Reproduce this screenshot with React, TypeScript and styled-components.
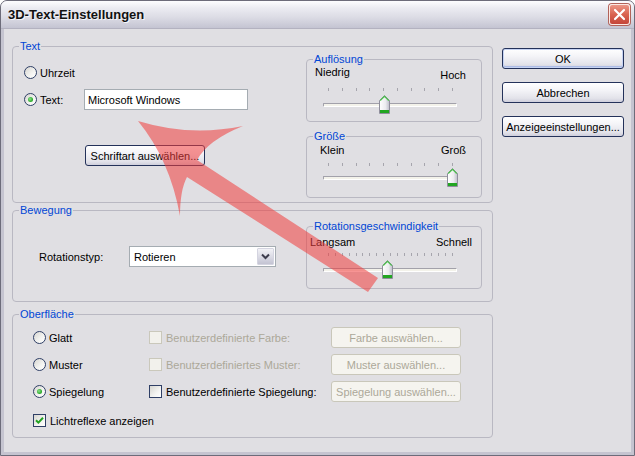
import React from "react";
import styled, { createGlobalStyle } from "styled-components";

const GlobalStyle = createGlobalStyle`
  html, body {
    margin: 0;
    padding: 0;
    background: #ffffff;
  }
  body {
    font-family: "Liberation Sans", Arial, sans-serif;
    font-size: 11px;
    color: #000;
  }
  * {
    box-sizing: border-box;
  }
`;

const Window = styled.div`
  position: relative;
  width: 635px;
  height: 456px;
  display: flex;
  flex-direction: column;
  background: #c5c4d0;
  border: 1px solid #6d6c7a;
  border-radius: 7px 7px 0 0;
  overflow: hidden;
`;

const TitleBar = styled.div`
  flex: none;
  height: 28px;
  display: flex;
  align-items: center;
  justify-content: space-between;
  padding: 0 4px 0 7px;
  background: linear-gradient(
    #fdfdff 0%,
    #ececf2 25%,
    #dcdce5 60%,
    #c4c4d2 100%
  );
  border-bottom: 1px solid #b3b2c0;
`;

const Title = styled.div`
  font-size: 13px;
  font-weight: bold;
  color: #111;
  text-shadow: 1px 1px 0 #f6f6fa;
`;

const CloseButton = styled.div`
  width: 21px;
  height: 21px;
  border-radius: 3px;
  border: 1px solid #fbe9e4;
  box-shadow: 0 0 0 1px #b2635a;
  background: linear-gradient(#eb9787 0%, #d9634f 50%, #c4463a 100%);
  display: flex;
  align-items: center;
  justify-content: center;
`;

const Client = styled.div`
  flex: 1;
  margin: 0 3px 3px;
  background: #e0dfe3;
  display: flex;
  padding: 11px 0 0 8px;
`;

const LeftColumn = styled.div`
  width: 481px;
  display: flex;
  flex-direction: column;
`;

const Group = styled.fieldset<{ $pb?: number; $pr?: number; $mt?: number }>`
  margin: ${(p) => p.$mt ?? 0}px 0 0 0;
  min-width: 0;
  padding: 0 ${(p) => p.$pr ?? 0}px ${(p) => p.$pb ?? 0}px 0;
  border: 1px solid #b9b8c2;
  border-radius: 4px;
`;

const Legend = styled.legend`
  margin-left: 6px;
  padding: 0 1px;
  line-height: 13px;
  font-size: 11px;
  color: #0046d5;
`;

const Split = styled.div`
  display: flex;
`;

const LeftPane = styled.div<{ $pt: number; $pl: number }>`
  flex: 1;
  display: flex;
  flex-direction: column;
  align-items: flex-start;
  padding: ${(p) => p.$pt}px 0 0 ${(p) => p.$pl}px;
`;

const RightPane = styled.div<{ $mt?: number }>`
  width: 176px;
  display: flex;
  flex-direction: column;
  gap: 8px;
  margin-top: ${(p) => p.$mt ?? 0}px;
`;

const Row = styled.div<{ $mt?: number; $ml?: number; $h?: number }>`
  display: flex;
  align-items: center;
  height: ${(p) => p.$h ?? 13}px;
  margin-top: ${(p) => p.$mt ?? 0}px;
  margin-left: ${(p) => p.$ml ?? 0}px;
`;

const Label = styled.span<{ $w?: number; $disabled?: boolean; $gap?: number }>`
  display: inline-block;
  margin-left: ${(p) => p.$gap ?? 3}px;
  width: ${(p) => (p.$w ? `${p.$w}px` : "auto")};
  color: ${(p) => (p.$disabled ? "#aca899" : "#000")};
  white-space: nowrap;
`;

const RadioCircle = styled.span<{ $checked?: boolean }>`
  position: relative;
  flex: none;
  width: 13px;
  height: 13px;
  border-radius: 50%;
  border: 1px solid #2f3f66;
  background: linear-gradient(135deg, #d6d5d0 0%, #f4f4f2 60%, #ffffff 100%);

  &::after {
    content: "";
    display: ${(p) => (p.$checked ? "block" : "none")};
    position: absolute;
    left: 3px;
    top: 3px;
    width: 5px;
    height: 5px;
    border-radius: 50%;
    background: radial-gradient(circle at 40% 40%, #8ee08e 0%, #2fae2f 60%, #1d8f1d 100%);
  }
`;

const CheckBox = styled.span<{ $disabled?: boolean }>`
  flex: none;
  width: 13px;
  height: 13px;
  border: 1px solid ${(p) => (p.$disabled ? "#cac8bb" : "#2f3f66")};
  background: ${(p) =>
    p.$disabled
      ? "#f2f1ec"
      : "linear-gradient(135deg, #d6d5d0 0%, #f4f4f2 60%, #ffffff 100%)"};
  display: flex;
  align-items: center;
  justify-content: center;
`;

const TextBox = styled.div`
  width: 164px;
  height: 21px;
  border: 1px solid #a5acb2;
  background: #fff;
  padding: 0 3px;
  display: flex;
  align-items: center;
`;

const Button = styled.div<{ $w: number; $disabled?: boolean; $default?: boolean }>`
  width: ${(p) => p.$w}px;
  height: 21px;
  flex: none;
  border-radius: 3px;
  display: flex;
  align-items: center;
  justify-content: center;
  white-space: nowrap;
  border: 1px solid ${(p) => (p.$disabled ? "#c9c7ba" : "#24325a")};
  color: ${(p) => (p.$disabled ? "#aca899" : "#000")};
  background: ${(p) =>
    p.$disabled
      ? "#f5f4ef"
      : "linear-gradient(#ffffff 0%, #f3f3f7 40%, #e3e3ea 80%, #cfcfdc 100%)"};
  box-shadow: ${(p) =>
    p.$default ? "inset 0 0 0 1px #c6d3f3, inset 0 -1px 0 1px #adbce6" : "none"};
`;

const ButtonColumn = styled.div`
  width: 122px;
  margin-left: 9px;
  padding-top: 8px;
  display: flex;
  flex-direction: column;
  gap: 13px;
`;

const Select = styled.div`
  width: 147px;
  height: 21px;
  border: 1px solid #a5acb2;
  background: #fff;
  display: flex;
  align-items: center;
  justify-content: space-between;
  padding: 1px;
`;

const SelectText = styled.span`
  padding-left: 3px;
`;

const DropButton = styled.div`
  width: 17px;
  height: 17px;
  border: 1px solid #d4d4e0;
  border-radius: 1px;
  background: linear-gradient(#f2f2f6 0%, #d7d7e2 60%, #c3c3d2 100%);
  display: flex;
  align-items: center;
  justify-content: center;
`;

const OptionsPane = styled.div`
  display: flex;
  flex-direction: column;
  padding: 6px 0 0 20px;
`;

const OptionGrid = styled.div`
  display: grid;
  grid-template-columns: 116px 182px 130px;
  grid-auto-rows: 21px;
  row-gap: 6px;
`;

const Cell = styled.div`
  display: flex;
  align-items: center;
`;

/* slider */

const SliderWrap = styled.div<{ $top: number; $bottom: number }>`
  display: flex;
  flex-direction: column;
  padding: ${(p) => p.$top}px 0 ${(p) => p.$bottom}px;
`;

const SliderLabels = styled.div<{ $pl: number; $pr: number }>`
  height: 13px;
  line-height: 13px;
  display: flex;
  justify-content: space-between;
  padding: 0 ${(p) => p.$pr}px 0 ${(p) => p.$pl}px;
`;

const MaxLabel = styled.span<{ $drop?: number }>`
  position: relative;
  top: ${(p) => p.$drop ?? 0}px;
`;

const TickRow = styled.div<{ $mt: number }>`
  margin: ${(p) => p.$mt}px 0 0 16px;
  width: 134px;
  height: 3px;
  padding: 0 4px 0 5px;
  display: flex;
  justify-content: space-between;
`;

const Tick = styled.span`
  width: 1px;
  height: 3px;
  background: #a6a5ad;
`;

const TrackRow = styled.div<{ $mt: number }>`
  position: relative;
  margin: ${(p) => p.$mt}px 0 0 16px;
  width: 134px;
  height: 19px;
`;

const Track = styled.div`
  margin-top: 8px;
  height: 4px;
  border: 1px solid;
  border-color: #a2a1aa #ffffff #ffffff #a2a1aa;
  background: #f3f2ea;
  border-radius: 1px;
`;

const Thumb = styled.svg`
  position: absolute;
  top: 0;
`;

type SliderProps = {
  min: string;
  max: string;
  value: number;
  ticks: number;
  top: number;
  tickGap: number;
  trackGap: number;
  bottom: number;
  padL: number;
  padR: number;
  maxDrop?: number;
};

const Slider = ({
  min,
  max,
  value,
  ticks,
  top,
  tickGap,
  trackGap,
  bottom,
  padL,
  padR,
  maxDrop,
}: SliderProps) => (
  <SliderWrap $top={top} $bottom={bottom}>
    <SliderLabels $pl={padL} $pr={padR}>
      <span>{min}</span>
      <MaxLabel $drop={maxDrop}>{max}</MaxLabel>
    </SliderLabels>
    <TickRow $mt={tickGap}>
      {Array.from({ length: ticks }).map((_, i) => (
        <Tick key={i} />
      ))}
    </TickRow>
    <TrackRow $mt={trackGap}>
      <Track />
      <Thumb
        width="11"
        height="19"
        viewBox="0 0 11 19"
        style={{ left: `${Math.round(value * 124)}px` }}
      >
        <defs>
          <linearGradient id="thumbFace" x1="0" x2="1" y1="0" y2="0">
            <stop offset="0" stopColor="#ffffff" />
            <stop offset="0.6" stopColor="#ececf0" />
            <stop offset="1" stopColor="#bdbdc9" />
          </linearGradient>
        </defs>
        <path
          d="M0.5 5.5 L5.5 0.5 L10.5 5.5 V18.5 H0.5 Z"
          fill="url(#thumbFace)"
          stroke="#8f8e9c"
        />
        <path d="M1.2 5.6 L5.5 1.3 L9.8 5.6" fill="none" stroke="#4cc44c" strokeWidth="1.3" />
        <rect x="1" y="15" width="9" height="3" fill="#22a622" />
      </Thumb>
    </TrackRow>
  </SliderWrap>
);

const Radio = ({ checked, label }: { checked?: boolean; label: string }) => (
  <>
    <RadioCircle $checked={checked} />
    <Label>{label}</Label>
  </>
);

const Check = ({
  checked,
  disabled,
  label,
}: {
  checked?: boolean;
  disabled?: boolean;
  label: string;
}) => (
  <>
    <CheckBox $disabled={disabled}>
      {checked && (
        <svg width="9" height="9" viewBox="0 0 9 9">
          <path
            d="M1 4.2 L3.4 6.6 L8 1.8"
            fill="none"
            stroke="#21a121"
            strokeWidth="2"
          />
        </svg>
      )}
    </CheckBox>
    <Label $disabled={disabled} $gap={4}>
      {label}
    </Label>
  </>
);

const Overlay = styled.svg`
  position: absolute;
  left: -1px;
  top: -1px;
  pointer-events: none;
`;

const App = () => {
  return (
    <>
      <GlobalStyle />
      <Window>
        <TitleBar>
          <Title>3D-Text-Einstellungen</Title>
          <CloseButton>
            <svg width="13" height="13" viewBox="0 0 13 13">
              <path
                d="M2 2 L11 11 M11 2 L2 11"
                stroke="#ffffff"
                strokeWidth="2.2"
                strokeLinecap="round"
              />
            </svg>
          </CloseButton>
        </TitleBar>
        <Client>
          <LeftColumn>
            <Group $pr={10} $pb={4}>
              <Legend>Text</Legend>
              <Split>
                <LeftPane $pt={13} $pl={11}>
                  <Row>
                    <Radio label="Uhrzeit" />
                  </Row>
                  <Row $mt={10} $h={21}>
                    <RadioCircle $checked />
                    <Label $w={44}>Text:</Label>
                    <TextBox>Microsoft Windows</TextBox>
                  </Row>
                  <Row $mt={35} $ml={61} $h={21}>
                    <Button $w={120}>Schriftart auswählen...</Button>
                  </Row>
                </LeftPane>
                <RightPane>
                  <Group>
                    <Legend>Auflösung</Legend>
                    <Slider
                      min="Niedrig"
                      max="Hoch"
                      value={0.45}
                      ticks={10}
                      top={0}
                      tickGap={9}
                      trackGap={4}
                      bottom={7}
                      padL={8}
                      padR={15}
                      maxDrop={3}
                    />
                  </Group>
                  <Group>
                    <Legend>Größe</Legend>
                    <Slider
                      min="Klein"
                      max="Groß"
                      value={1}
                      ticks={10}
                      top={1}
                      tickGap={6}
                      trackGap={2}
                      bottom={10}
                      padL={13}
                      padR={15}
                    />
                  </Group>
                </RightPane>
              </Split>
            </Group>

            <Group $mt={1} $pr={10} $pb={12}>
              <Legend>Bewegung</Legend>
              <Split>
                <LeftPane $pt={29} $pl={26}>
                  <Row $h={21}>
                    <Label $w={90} $gap={0}>
                      Rotationstyp:
                    </Label>
                    <Select>
                      <SelectText>Rotieren</SelectText>
                      <DropButton>
                        <svg width="9" height="7" viewBox="0 0 9 7">
                          <path
                            d="M1 1.5 L4.5 5 L8 1.5"
                            fill="none"
                            stroke="#3d3d4d"
                            strokeWidth="2"
                          />
                        </svg>
                      </DropButton>
                    </Select>
                  </Row>
                </LeftPane>
                <RightPane $mt={3}>
                  <Group>
                    <Legend>Rotationsgeschwindigkeit</Legend>
                    <Slider
                      min="Langsam"
                      max="Schnell"
                      value={0.476}
                      ticks={19}
                      top={3}
                      tickGap={4}
                      trackGap={4}
                      bottom={9}
                      padL={3}
                      padR={9}
                    />
                  </Group>
                </RightPane>
              </Split>
            </Group>

            <Group $mt={6} $pr={10} $pb={6}>
              <Legend>Oberfläche</Legend>
              <OptionsPane>
                <OptionGrid>
                  <Cell>
                    <Radio label="Glatt" />
                  </Cell>
                  <Cell>
                    <Check disabled label="Benutzerdefinierte Farbe:" />
                  </Cell>
                  <Cell>
                    <Button $w={130} $disabled>
                      Farbe auswählen...
                    </Button>
                  </Cell>
                  <Cell>
                    <Radio label="Muster" />
                  </Cell>
                  <Cell>
                    <Check disabled label="Benutzerdefiniertes Muster:" />
                  </Cell>
                  <Cell>
                    <Button $w={130} $disabled>
                      Muster auswählen...
                    </Button>
                  </Cell>
                  <Cell>
                    <Radio checked label="Spiegelung" />
                  </Cell>
                  <Cell>
                    <Check label="Benutzerdefinierte Spiegelung:" />
                  </Cell>
                  <Cell>
                    <Button $w={130} $disabled>
                      Spiegelung auswählen...
                    </Button>
                  </Cell>
                </OptionGrid>
                <Row $mt={8} $h={21}>
                  <Check checked label="Lichtreflexe anzeigen" />
                </Row>
              </OptionsPane>
            </Group>
          </LeftColumn>

          <ButtonColumn>
            <Button $w={122} $default>
              OK
            </Button>
            <Button $w={122}>Abbrechen</Button>
            <Button $w={122}>Anzeigeeinstellungen...</Button>
          </ButtonColumn>
        </Client>

        <Overlay width="635" height="456" viewBox="0 0 635 456">
          <path
            d="M138 121 Q190 137 243 126 Q208 140 197 160 L378 278 L368 292 L187 177 Q180 190 180 216 Q170 160 138 121 Z"
            fill="#f03c3c"
            fillOpacity="0.55"
          />
        </Overlay>
      </Window>
    </>
  );
};

export default App;
